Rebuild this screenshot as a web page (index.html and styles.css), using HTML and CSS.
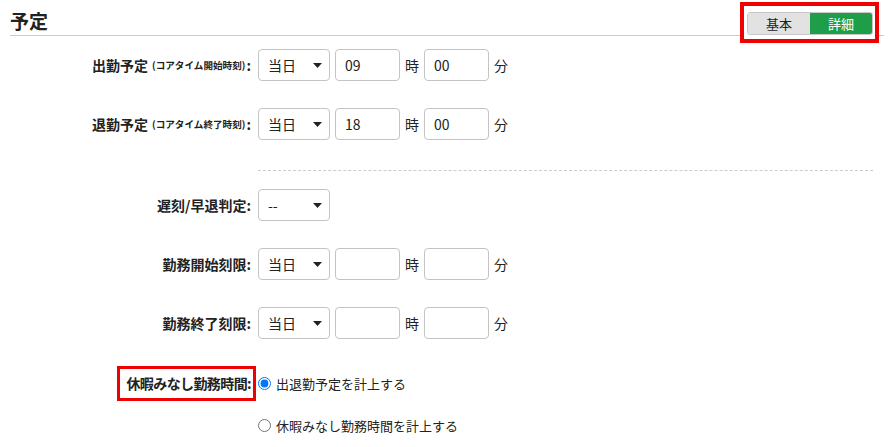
FILE: index.html
```html
<!DOCTYPE html>
<html lang="ja">
<head>
  <meta charset="UTF-8">
  <title>予定</title>
  <link rel="stylesheet" href="styles.css">
</head>
<body>

<div class="page">
  <!-- Header -->
  <header class="header">
    <h1>予定</h1>
    <div class="annot annot-toggle">
      <div class="toggle">
        <span class="toggle-item">基本</span>
        <span class="toggle-item active">詳細</span>
      </div>
    </div>
  </header>

  <form class="form">
    <div class="row first">
      <label class="label">出勤予定 <small>(コアタイム開始時刻)</small>:</label>
      <div class="controls">
        <div class="select-wrap">
          <select><option>当日</option><option>翌日</option></select>
          <svg class="arrow" width="9" height="5" viewBox="0 0 9 5"><path d="M0 0h9L4.5 5z"/></svg>
        </div>
        <input type="text" class="num" value="09">
        <span class="unit">時</span>
        <input type="text" class="num" value="00">
        <span class="unit">分</span>
      </div>
    </div>

    <div class="row">
      <label class="label">退勤予定 <small>(コアタイム終了時刻)</small>:</label>
      <div class="controls">
        <div class="select-wrap">
          <select><option>当日</option><option>翌日</option></select>
          <svg class="arrow" width="9" height="5" viewBox="0 0 9 5"><path d="M0 0h9L4.5 5z"/></svg>
        </div>
        <input type="text" class="num" value="18">
        <span class="unit">時</span>
        <input type="text" class="num" value="00">
        <span class="unit">分</span>
      </div>
    </div>

    <hr class="divider">

    <div class="row after-divider">
      <label class="label">遅刻/早退判定:</label>
      <div class="controls">
        <div class="select-wrap">
          <select><option>--</option></select>
          <svg class="arrow" width="9" height="5" viewBox="0 0 9 5"><path d="M0 0h9L4.5 5z"/></svg>
        </div>
      </div>
    </div>

    <div class="row">
      <label class="label">勤務開始刻限:</label>
      <div class="controls">
        <div class="select-wrap">
          <select><option>当日</option><option>翌日</option></select>
          <svg class="arrow" width="9" height="5" viewBox="0 0 9 5"><path d="M0 0h9L4.5 5z"/></svg>
        </div>
        <input type="text" class="num" value="">
        <span class="unit">時</span>
        <input type="text" class="num" value="">
        <span class="unit">分</span>
      </div>
    </div>

    <div class="row">
      <label class="label">勤務終了刻限:</label>
      <div class="controls">
        <div class="select-wrap">
          <select><option>当日</option><option>翌日</option></select>
          <svg class="arrow" width="9" height="5" viewBox="0 0 9 5"><path d="M0 0h9L4.5 5z"/></svg>
        </div>
        <input type="text" class="num" value="">
        <span class="unit">時</span>
        <input type="text" class="num" value="">
        <span class="unit">分</span>
      </div>
    </div>

    <div class="row">
      <div class="label"><span class="annot annot-label">休暇みなし勤務時間:</span></div>
      <div class="controls">
        <label class="radio"><input type="radio" name="minashi" checked> 出退勤予定を計上する</label>
      </div>
    </div>

    <div class="row radio-row">
      <div class="label"></div>
      <div class="controls">
        <label class="radio"><input type="radio" name="minashi"> 休暇みなし勤務時間を計上する</label>
      </div>
    </div>
  </form>
</div>

</body>
</html>
```

FILE: styles.css
```css
/* Global styles */
body {
  font-family: "Noto Sans CJK JP", "Noto Sans", sans-serif;
  margin: 0;
  background: #fff;
  color: #222;
}

.page {
  padding: 2px 10px 0;
}

/* Header */
.header {
  display: flex;
  justify-content: space-between;
  align-items: flex-start;
  height: 33px;
  border-bottom: 1px solid #ccc;
}

.header h1 {
  margin: 6px 0 0;
  font-size: 19px;
  line-height: 26px;
  font-weight: bold;
}

/* red annotation frames */
.annot {
  border: 4px solid #f00000;
  background: #fff;
}

.annot-toggle {
  padding: 6px 2px 4px 3px;
  margin-right: 5px;
  margin-bottom: -8px;
}

.toggle {
  display: flex;
  border: 1px solid #c8c8c8;
  border-radius: 3px;
  overflow: hidden;
}

.toggle-item {
  width: 62px;
  height: 21px;
  line-height: 21px;
  text-align: center;
  font-size: 13px;
  background: #e2e2e2;
}

.toggle-item.active {
  background: #1f9e4a;
  color: #fff;
}

/* Form */
.form {
  display: flex;
  flex-direction: column;
}

.row {
  display: flex;
  align-items: center;
  min-height: 32px;
  margin-top: 27px;
}

.row.first {
  margin-top: 13px;
}

.row.after-divider {
  margin-top: 18px;
}

.row.radio-row {
  min-height: 20px;
  margin-top: 14px;
}

.label {
  flex: 0 0 241px;
  display: flex;
  justify-content: flex-end;
  margin-right: 7px;
  font-size: 14px;
  font-weight: bold;
  white-space: nowrap;
}

.label small {
  font-size: 9.6px;
  margin: 0 1px 0 4px;
  align-self: center;
}

.annot-label {
  border-width: 3px;
  padding: 2px 2px 3px 6px;
  margin-right: -5px;
  line-height: 24px;
  letter-spacing: -0.6px;
}

.controls {
  display: flex;
  align-items: center;
}

.select-wrap {
  position: relative;
}

select {
  appearance: none;
  width: 72px;
  height: 32px;
  padding: 0 0 0 9px;
  border: 1px solid #c4c4c4;
  border-radius: 4px;
  background: #fff;
  font-family: inherit;
  font-size: 14px;
  color: #222;
}

.select-wrap .arrow {
  position: absolute;
  right: 8px;
  top: 14px;
  fill: #222;
  pointer-events: none;
}

input.num {
  box-sizing: border-box;
  width: 65px;
  height: 32px;
  margin-left: 5px;
  padding: 0 9px;
  border: 1px solid #c4c4c4;
  border-radius: 4px;
  font-family: inherit;
  font-size: 14px;
  color: #222;
}

.unit {
  margin-left: 5px;
  font-size: 14px;
}

.divider {
  margin: 30px 11px 0 248px;
  border: 0;
  border-top: 1px dashed #ccc;
}

.radio {
  display: flex;
  align-items: center;
  font-size: 13px;
}

.radio input {
  width: 13px;
  height: 13px;
  margin: 0 5px 0 0;
}
```
